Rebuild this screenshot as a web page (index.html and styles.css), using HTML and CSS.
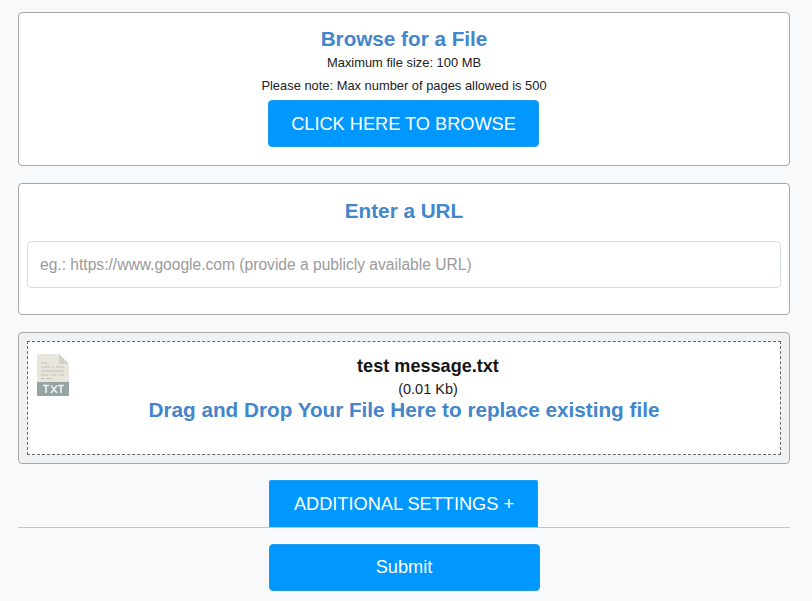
FILE: index.html
```html
<!DOCTYPE html>
<html lang="en">
<head>
<meta charset="utf-8">
<title>Upload</title>
<link rel="stylesheet" href="styles.css">
</head>
<body>
<main class="page">
  <section class="card browse">
    <h2 class="title">Browse for a File</h2>
    <p class="note">Maximum file size: 100 MB</p>
    <p class="note second">Please note: Max number of pages allowed is 500</p>
    <a class="btn browse-btn">CLICK HERE TO BROWSE</a>
  </section>
  <section class="card url">
    <h2 class="title">Enter a URL</h2>
    <input class="url-input" type="text" placeholder="eg.: https://www.google.com (provide a publicly available URL)">
  </section>
  <section class="card drop">
    <div class="dashed">
      <svg class="file-icon" width="32" height="42" viewBox="0 0 32 42" aria-hidden="true">
        <path d="M1 0H22L32 10V28H0V1Q0 0 1 0Z" fill="#e8e6dc"/>
        <path d="M22 0L32 10H24Q22 10 22 8Z" fill="#d3d1c5"/>
        <path d="M0 28H32V41Q32 42 31 42H1Q0 42 0 41Z" fill="#95a5a6"/>
        <path d="M4 9H10M4 13H13M15 13H17M19 13H27M4 17H27M4 21H12M14 21H20M22 21H27M4 24.500H7M9 24.500H14" stroke="#c4c2b6" stroke-width="1" fill="none"/>
        <path d="M6 31.500H12M9 31.500V39M14 31.500L20 39M20 31.500L14 39M21 31.500H27M24 31.500V39" stroke="#f1f1ec" stroke-width="1.600" fill="none"/>
      </svg>
      <div class="file-name">test message.txt</div>
      <div class="file-size">(0.01 Kb)</div>
      <div class="title drag">Drag and Drop Your File Here to replace existing file</div>
    </div>
  </section>
  <div class="settings-row"><a class="btn settings-btn">ADDITIONAL SETTINGS +</a></div>
  <hr class="rule">
  <div class="submit-row"><button class="btn submit-btn" type="button">Submit</button></div>
</main>
</body>
</html>
```
FILE: styles.css
```css
* { box-sizing: border-box; }
html, body { margin: 0; padding: 0; height: 100%; overflow: hidden; }
body { background: #f8f9fb; font-family: "Liberation Sans", Arial, sans-serif; color: #212529; }
.page { width: 772px; margin-left: 18px; padding-top: 12px; display: flex; flex-direction: column; }
.card { background: #fff; border: 1px solid #a8a8a8; border-radius: 4px; text-align: center; }
.browse { height: 154px; padding-top: 14px; margin-bottom: 17px; }
.url { height: 132px; padding: 15px 8px 0; margin-bottom: 17px; }
.drop { height: 132px; background: #f0f1f3; padding: 8px; margin-bottom: 16px; }
.title { margin: 0; font-size: 20.7px; line-height: 24px; font-weight: 700; color: #4286cc; }
.note { margin: 0; font-size: 12.9px; line-height: 18px; color: #222; }
.browse .note { margin-top: 3px; }
.browse .second { margin-top: 5px; }
.btn { display: block; background: #0098ff; color: #fff; font-family: inherit; font-size: 18.2px; border: 1px solid #1e9bf0; text-align: center; }
.browse-btn { width: 271px; height: 47px; margin: 5px 0 0 249px; line-height: 46px; border-radius: 4px; }
.url-input { display: block; width: 100%; height: 47px; margin-top: 18px; padding: 0 12px; border: 1px solid #d8dde3; border-radius: 4px; background: #fff; font-family: inherit; font-size: 15.6px; color: #333; outline: none; }
.url-input::placeholder { color: #9a9a9a; opacity: 1; }
.dashed { position: relative; height: 114px; background: #fff; border: 1px dashed #666; padding-top: 12px; }
.file-icon { position: absolute; left: 9px; top: 12px; }
.file-name { padding-left: 48px; font-size: 18.1px; line-height: 24px; font-weight: 700; color: #151515; }
.file-size { padding-left: 48px; font-size: 14.5px; line-height: 16px; margin-top: 3px; color: #222; }
.drag { margin-top: 1px; }
.settings-row, .submit-row { display: flex; justify-content: center; }
.settings-btn { width: 269px; height: 47px; padding-left: 2px; line-height: 47px; border-radius: 2px 2px 0 0; border-bottom: 0; margin-left: -2px; }
.rule { width: 100%; margin: 0; height: 1px; border: 0; background: #c4c4c4; }
.submit-row { margin-top: 16px; }
.submit-btn { width: 271px; height: 47px; border-radius: 4px; padding: 0; }
```
